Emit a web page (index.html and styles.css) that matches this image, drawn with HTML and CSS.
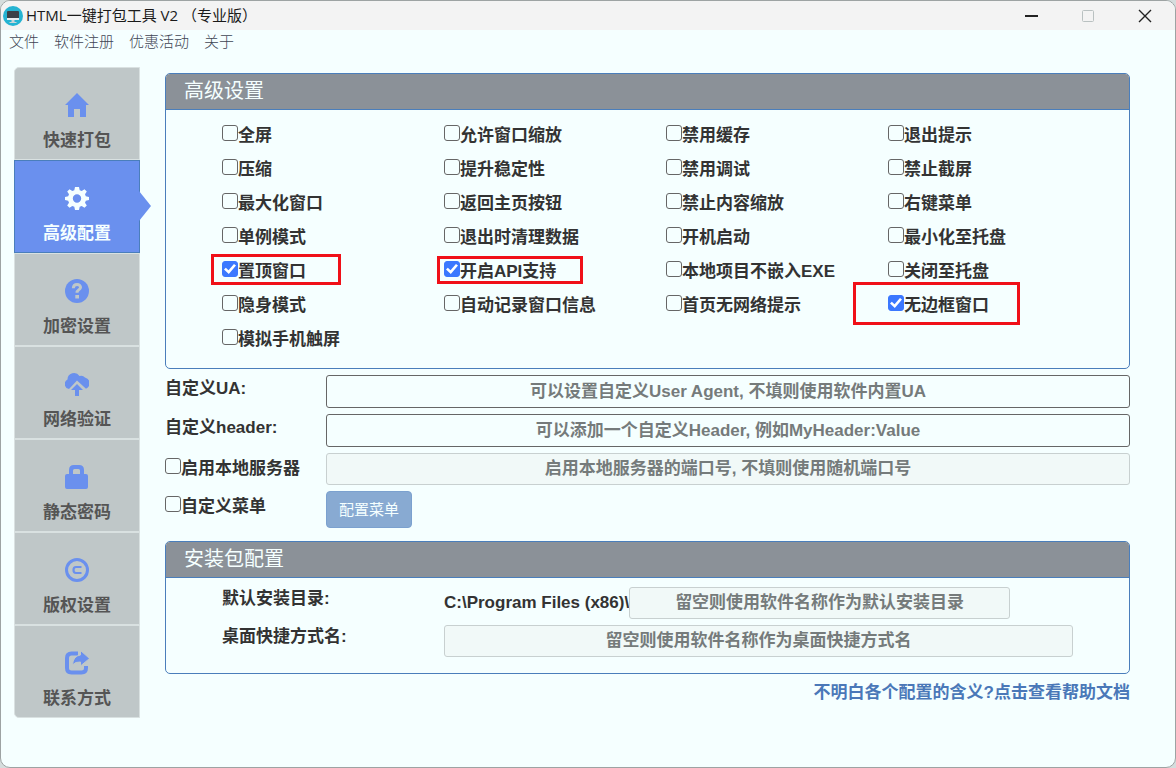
FILE: index.html
```html
<!DOCTYPE html>
<html lang="zh-CN">
<head>
    <meta charset="UTF-8">
    <meta name="viewport" content="width=device-width, initial-scale=1.0">
    <title>HTML一键打包工具 V2 （专业版）</title>
    <link rel="stylesheet" href="styles.css">
</head>
<body>
    <div class="window">
        <header class="titlebar">
            <svg class="logo" viewBox="0 0 20 20">
                <circle cx="10" cy="10" r="10" fill="#25b3d2"/>
                <rect x="4" y="5" width="12" height="8" rx="1" fill="#3b4147"/>
                <path d="M4 12h12v1.500q0 .5-.5.5h-11q-.5 0-.5-.5z" fill="#e8eef0"/>
                <path d="M8.500 14h3v2h2v1h-7v-1h2z" fill="#c9d4d8"/>
            </svg>
            <h1 class="title">HTML一键打包工具 V2 （专业版）</h1>
            <div class="controls">
                <button type="button" aria-label="最小化"><svg viewBox="0 0 14 14"><path d="M1 7h13" stroke="#222" stroke-width="2"/></svg></button>
                <button type="button" aria-label="最大化" disabled><svg viewBox="0 0 14 14"><rect x="1.500" y="1.500" width="11" height="11" rx="1" fill="none" stroke="#b9c1c1"/></svg></button>
                <button type="button" aria-label="关闭"><svg viewBox="0 0 14 14"><path d="M1 1l12 12M13 1L1 13" stroke="#222" stroke-width="1.400"/></svg></button>
            </div>
        </header>

        <nav class="menubar">
            <a href="#">文件</a>
            <a href="#">软件注册</a>
            <a href="#">优惠活动</a>
            <a href="#">关于</a>
        </nav>

        <div class="content">
            <nav class="sidebar">
                <a class="tab" href="#">
                    <svg viewBox="0 0 24 24"><path d="M12 0L0 12h3v12h6v-8h6v8h6V12h3z"/></svg>
                    快速打包
                </a>
                <a class="tab active" href="#">
                    <svg viewBox="0 0 24 24"><path fill-rule="evenodd" d="M10 1h4l.7 3.200 2 .8 2.800-1.800 2.300 2.300L20 8.300l.8 2L24 11v3l-3.200.7-.8 2 1.800 2.800-2.300 2.300-2.800-1.800-2 .8L14 24h-4l-.7-3.200-2-.8-2.800 1.800-2.300-2.300L4 16.700l-.8-2L0 14v-3l3.200-.7.800-2-1.800-2.800 2.300-2.300L7.300 5l2-.8zM12 8.300a4.200 4.200 0 1 0 0 8.400 4.200 4.200 0 0 0 0-8.400z"/></svg>
                    高级配置
                </a>
                <a class="tab" href="#">
                    <svg viewBox="0 0 24 24"><circle cx="12" cy="12" r="12"/><path d="M8.300 9.200c.2-5.200 7.700-4.600 7.200-.6-.3 2.200-3.500 2-3.500 5.200" fill="none" stroke="#bfc7c8" stroke-width="3"/><path d="M10.300 16h3.700v3.500h-3.700z" fill="#bfc7c8"/></svg>
                    加密设置
                </a>
                <a class="tab" href="#">
                    <svg viewBox="0 0 24 24"><path d="M4 17a5 5 0 0 1-1.500-9.400A6.500 6.500 0 0 1 14.500 4 5 5 0 0 1 20 5.500a6 6 0 0 1 1 11.300L12 8.500z"/><path d="M12 12l6 6h-4v6h-4v-6H6z"/></svg>
                    网络验证
                </a>
                <a class="tab" href="#">
                    <svg viewBox="0 0 24 24"><path fill-rule="evenodd" d="M4 9V5q0-5 5-5h5q5 0 5 5v4h2q2 0 2 2v11q0 2-2 2H2q-2 0-2-2V11q0-2 2-2zm4 0h7V5.500Q15 4 13.500 4h-4Q8 4 8 5.500z"/></svg>
                    静态密码
                </a>
                <a class="tab" href="#">
                    <svg viewBox="0 0 24 24"><circle cx="12" cy="12" r="10.500" fill="none" stroke="#6a90ee" stroke-width="3"/><path d="M16.500 9H11q-2.500 0-2.500 3t2.500 3h5.500" fill="none" stroke="#6a90ee" stroke-width="2.200"/></svg>
                    版权设置
                </a>
                <a class="tab" href="#">
                    <svg viewBox="0 0 24 24"><path d="M13 2.500H6.500Q2 2.500 2 7v10q0 4.500 4.500 4.500h10q4.500 0 4.500-4.500v-2" fill="none" stroke="#6a90ee" stroke-width="4"/><path d="M15.500-.5L24.500 7.500 15.500 15v-4Q10 10.500 7.500 14 8 5 15.500 4z" stroke="#bfc7c8" stroke-width="1"/></svg>
                    联系方式
                </a>
            </nav>

            <main class="main">
                <section class="panel">
                    <h2>高级设置</h2>
                    <div class="options">
                        <label><input type="checkbox">全屏</label>
                        <label><input type="checkbox">允许窗口缩放</label>
                        <label><input type="checkbox">禁用缓存</label>
                        <label><input type="checkbox">退出提示</label>
                        <label><input type="checkbox">压缩</label>
                        <label><input type="checkbox">提升稳定性</label>
                        <label><input type="checkbox">禁用调试</label>
                        <label><input type="checkbox">禁止截屏</label>
                        <label><input type="checkbox">最大化窗口</label>
                        <label><input type="checkbox">返回主页按钮</label>
                        <label><input type="checkbox">禁止内容缩放</label>
                        <label><input type="checkbox">右键菜单</label>
                        <label><input type="checkbox">单例模式</label>
                        <label><input type="checkbox">退出时清理数据</label>
                        <label><input type="checkbox">开机启动</label>
                        <label><input type="checkbox">最小化至托盘</label>
                        <label><input type="checkbox" checked>置顶窗口<span class="mark mark-top"></span></label>
                        <label><input type="checkbox" checked>开启API支持<span class="mark mark-api"></span></label>
                        <label><input type="checkbox">本地项目不嵌入EXE</label>
                        <label><input type="checkbox">关闭至托盘</label>
                        <label><input type="checkbox">隐身模式</label>
                        <label><input type="checkbox">自动记录窗口信息</label>
                        <label><input type="checkbox">首页无网络提示</label>
                        <label><input type="checkbox" checked>无边框窗口<span class="mark mark-frame"></span></label>
                        <label><input type="checkbox">模拟手机触屏</label>
                    </div>
                </section>

                <div class="form">
                    <label class="name" for="ua">自定义UA:</label>
                    <input type="text" id="ua" placeholder="可以设置自定义User Agent, 不填则使用软件内置UA">
                    <label class="name" for="header">自定义header:</label>
                    <input type="text" id="header" placeholder="可以添加一个自定义Header, 例如MyHeader:Value">
                    <label class="check"><input type="checkbox">启用本地服务器</label>
                    <input type="text" aria-label="端口号" placeholder="启用本地服务器的端口号, 不填则使用随机端口号" disabled>
                    <label class="check"><input type="checkbox">自定义菜单</label>
                    <button type="button" class="btn" disabled>配置菜单</button>
                </div>

                <section class="panel">
                    <h2>安装包配置</h2>
                    <div class="install">
                        <label for="dir">默认安装目录:</label>
                        <div class="path">
                            <span>C:\Program Files (x86)\</span>
                            <input type="text" id="dir" placeholder="留空则使用软件名称作为默认安装目录" disabled>
                        </div>
                        <label for="shortcut">桌面快捷方式名:</label>
                        <input type="text" id="shortcut" placeholder="留空则使用软件名称作为桌面快捷方式名" disabled>
                    </div>
                </section>

                <a class="help" href="#">不明白各个配置的含义?点击查看帮助文档</a>
            </main>
        </div>
    </div>
</body>
</html>
```
FILE: styles.css
```css
* {
    box-sizing: border-box;
}
body {
    margin: 0;
    background-color: #d5dddd;
    color: #333;
    font-family: "Liberation Sans", "Noto Sans CJK SC", sans-serif;
    font-size: 17px;
    font-weight: bold;
    line-height: 24px;
}
a {
    color: inherit;
    text-decoration: none;
}
.window {
    min-height: 100vh;
    border: 1px solid #9da3a3;
    border-radius: 10px;
    background-color: #f5ffff;
    overflow: hidden;
}

/* 标题栏 */
.titlebar {
    display: flex;
    align-items: center;
    height: 29px;
    padding: 0 2px;
    background-color: #f3f3f3;
}
.logo {
    width: 20px;
    height: 20px;
}
.title {
    flex: 1;
    margin: 0 0 2px 3px;
    color: #1a1a1a;
    font-family: "Open Sans", "Noto Sans CJK SC", sans-serif;
    font-size: 15px;
    font-weight: normal;
    line-height: 24px;
}
.controls {
    display: flex;
}
.controls button {
    display: flex;
    align-items: center;
    justify-content: center;
    width: 57px;
    height: 28px;
    padding: 0;
    border: 0;
    background: none;
}
.controls svg {
    width: 14px;
    height: 14px;
}

/* 菜单栏 */
.menubar {
    display: flex;
    gap: 15px;
    padding: 0 8px;
    color: #3f4654;
    font-family: "Noto Sans CJK SC", sans-serif;
    font-size: 15px;
    font-weight: 300;
    line-height: 22px;
}
.content {
    display: flex;
    align-items: flex-start;
    gap: 25px;
    padding: 15px 45px 20px 13px;
}

/* 左侧导航 */
.sidebar {
    display: flex;
    flex-direction: column;
    width: 126px;
}
.tab {
    display: flex;
    flex-direction: column;
    align-items: center;
    gap: 12px;
    position: relative;
    height: 93px;
    padding-top: 25px;
    border: 1px solid #d9e1e1;
    background-color: #bfc7c8;
    color: #555;
}
.tab:first-child {
    border-top-left-radius: 5px;
}
.tab:last-child {
    border-bottom-left-radius: 5px;
}
.tab svg {
    width: 24px;
    height: 24px;
    fill: #6a90ee;
}
.tab.active {
    border-color: #4a7ebb;
    background-color: #6a90ee;
    color: #f5ffff;
}
.tab.active svg {
    fill: #f5ffff;
}
/* 选中项右边的箭头 */
.tab.active::after {
    content: "";
    position: absolute;
    top: 30px;
    left: 100%;
    border: 15px solid transparent;
    border-left: 12px solid #6a90ee;
    border-right: 0;
}

/* 右侧内容 */
.main {
    display: flex;
    flex-direction: column;
    flex: 1;
    padding-top: 6px;
}
.panel {
    border: 1px solid #4a7ebb;
    border-radius: 5px;
}
.panel h2 {
    margin: 0;
    padding: 0 18px;
    border-bottom: 1px solid #4a7ebb;
    border-radius: 4px 4px 0 0;
    background-color: #8b9198;
    color: #f5ffff;
    font-size: 20px;
    font-weight: normal;
    line-height: 35px;
}
.options {
    display: grid;
    grid-template-columns: repeat(4, 1fr);
    grid-auto-rows: 34px;
    padding: 9px 19px 11px 56px;
}
.options label {
    display: flex;
    align-items: center;
    position: relative;
}
input[type="checkbox"] {
    appearance: none;
    display: grid;
    place-items: center;
    flex: none;
    width: 16px;
    height: 16px;
    margin: 0 0 6px;
    border: 1px solid #666;
    border-radius: 3px;
}
input[type="checkbox"]:checked {
    border-color: #3b78ff;
    background-color: #3b78ff;
}
input[type="checkbox"]:checked::after {
    content: "";
    width: 12px;
    height: 10px;
    background-color: #fff;
    clip-path: polygon(0 55%, 15% 38%, 38% 63%, 83% 0, 100% 14%, 40% 100%);
}

/* 红框标注 */
.mark {
    position: absolute;
    border: 3px solid #f01018;
}
.mark-top {
    top: -1px;
    left: -11px;
    width: 130px;
    height: 31px;
}
.mark-api {
    top: 1px;
    left: -7px;
    width: 146px;
    height: 28px;
}
.mark-frame {
    top: -7px;
    left: -35px;
    width: 167px;
    height: 43px;
}

/* 输入框 */
input[type="text"] {
    width: 100%;
    min-width: 0;
    height: 33px;
    padding: 0 8px;
    border: 1px solid #666;
    border-radius: 3px;
    background-color: transparent;
    color: #333;
    font: inherit;
    text-align: center;
}
input[type="text"]::placeholder {
    color: #757b7b;
}
input[type="text"]:disabled {
    height: 32px;
    border-color: #c8d0d0;
    background-color: #f1f9f8;
}
.form {
    display: grid;
    grid-template-columns: 161px 1fr;
    row-gap: 6px;
    padding: 6px 0 13px;
}
.name {
    padding-top: 2px;
}
.check {
    display: flex;
    align-items: center;
    height: 32px;
}
.btn {
    justify-self: start;
    height: 37px;
    padding: 0 12px;
    border: 1px solid #7ba1cf;
    border-radius: 4px;
    background-color: #88aad2;
    color: #f5ffff;
    font-family: inherit;
    font-size: 15px;
    line-height: 32px;
}
.install {
    display: grid;
    grid-template-columns: 222px 1fr;
    row-gap: 6px;
    padding: 9px 56px 16px;
}
.path {
    display: flex;
    align-items: center;
    width: 90%;
}
.path span {
    white-space: nowrap;
}
.help {
    align-self: flex-end;
    padding-top: 7px;
    color: #4a78b8;
}
```
